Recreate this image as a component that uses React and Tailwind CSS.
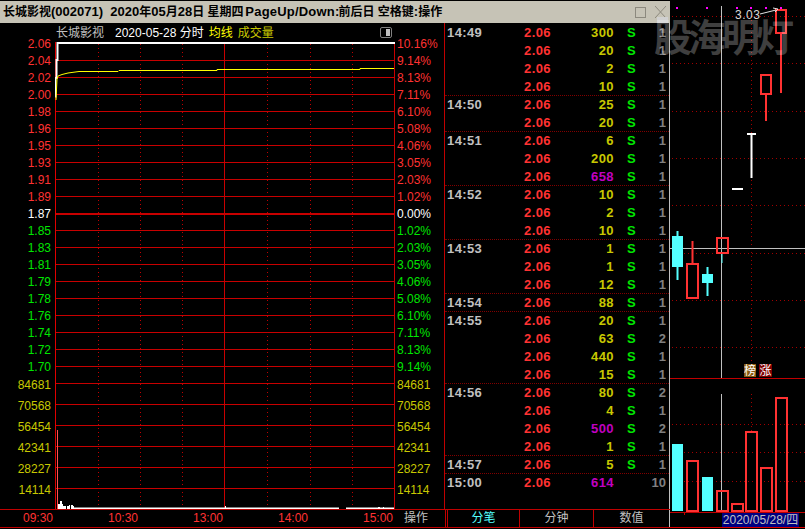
const CJK = { fontFamily: '"Liberation Sans", "Noto Sans CJK SC", sans-serif' };

const prices = [
  ['2.06', '10.16%', 'r'], ['2.04', '9.14%', 'r'], ['2.02', '8.13%', 'r'], ['2.00', '7.11%', 'r'],
  ['1.98', '6.10%', 'r'], ['1.96', '5.08%', 'r'], ['1.95', '4.06%', 'r'], ['1.93', '3.05%', 'r'],
  ['1.91', '2.03%', 'r'], ['1.89', '1.02%', 'r'], ['1.87', '0.00%', 'w'], ['1.85', '1.02%', 'g'],
  ['1.83', '2.03%', 'g'], ['1.81', '3.05%', 'g'], ['1.79', '4.06%', 'g'], ['1.78', '5.08%', 'g'],
  ['1.76', '6.10%', 'g'], ['1.74', '7.11%', 'g'], ['1.72', '8.13%', 'g'], ['1.70', '9.14%', 'g'],
];
const volumes = ['84681', '70568', '56454', '42341', '28227', '14114'];

const axisColor = {
  r: 'text-[#ff3232]',
  w: 'text-white',
  g: 'text-[#00e600]',
};

// [time, vol, count] - time only on first row of each minute
const ticks = [
  ['14:49', 300, 1], ['', 20, 1], ['', 2, 1], ['', 10, 1],
  ['14:50', 25, 1], ['', 20, 1],
  ['14:51', 6, 1], ['', 200, 1], ['', 658, 1],
  ['14:52', 10, 1], ['', 2, 1], ['', 10, 1],
  ['14:53', 1, 1], ['', 1, 1], ['', 12, 1],
  ['14:54', 88, 1],
  ['14:55', 20, 1], ['', 63, 2], ['', 440, 1], ['', 15, 1],
  ['14:56', 80, 2], ['', 4, 1], ['', 500, 2], ['', 1, 1],
  ['14:57', 5, 1],
  ['15:00', 614, 10],
];

const priceGrid = [60, 77, 94, 111, 128, 145, 162, 179, 196, 230, 247, 264, 281, 298, 315, 332, 349, 366, 383, 404, 425, 446, 467, 488];
const dotted = [98, 140, 182, 267, 310, 352];

// small volume bars after the open
const smallBars = [
  [58, 2, 5], [60, 2, 8], [62, 1, 5], [63, 3, 3], [67, 2, 3], [69, 1, 4], [71, 2, 4], [73, 1, 3],
  [225, 1, 3], [378, 2, 2], [383, 1, 2],
];

function MainChart() {
  return (
    <svg width="341" height="467" viewBox="55 42 341 467" className="block">
      {priceGrid.map((y) => (
        <line key={y} x1="55" x2="395" y1={y + 0.5} y2={y + 0.5} stroke="#c80000" />
      ))}
      <line x1="55" x2="395" y1="214" y2="214" stroke="#c80000" strokeWidth="2" />
      {dotted.map((x) => (
        <line key={x} x1={x + 0.5} x2={x + 0.5} y1="44" y2="509" stroke="#c00000" strokeDasharray="1 3" />
      ))}
      <line x1="224.5" x2="224.5" y1="44" y2="509" stroke="#c80000" />
      <line x1="55" x2="55" y1="42" y2="509" stroke="#e00000" strokeWidth="2" />
      <line x1="394.5" x2="394.5" y1="42" y2="509" stroke="#c80000" />
      <polyline
        points="53,96.5 55.5,96.5 55.5,78 56.5,78 56.5,60 57.5,60 57.5,43 395,43"
        fill="none"
        stroke="#fff"
        strokeWidth="2"
      />
      <polyline
        points="56,100 57,79 58,76 62,74.5 68,73 79,71.5 118,71.5 119,70.5 217,70.5 217,69.5 360,69.5 360,68.5 394,68.5"
        fill="none"
        stroke="#ffff00"
      />
      <rect x="57" y="430" width="1" height="79" fill="#ff5050" />
      {smallBars.map(([x, w, h]) => (
        <rect key={x} x={x} y={509 - h} width={w} height={h} fill="#fff" />
      ))}
      <rect x="74" y="507.5" width="265" height="1.5" fill="#fff" />
      <rect x="346" y="507.5" width="48" height="1.5" fill="#fff" />
    </svg>
  );
}

const candles = [
  { x: 672, w: 11, top: 236, bottom: 267, wickTop: 231, wickBottom: 280, up: false },
  { x: 687, w: 11, top: 264, bottom: 298, wickTop: 241, wickBottom: 264, up: true },
  { x: 702, w: 11, top: 274, bottom: 283, wickTop: 267, wickBottom: 296, up: false },
  { x: 717, w: 11, top: 238, bottom: 253, wickTop: 238, wickBottom: 238, up: true },
  { x: 761, w: 10, top: 75, bottom: 94, wickTop: 94, wickBottom: 121, up: true },
  { x: 776, w: 10, top: 10, bottom: 33, wickTop: 33, wickBottom: 93, up: true },
];

const volBars = [
  { x: 672, top: 444, up: false },
  { x: 687, top: 461, up: true },
  { x: 702, top: 477, up: false },
  { x: 717, top: 491, up: true },
  { x: 732, top: 504, up: true },
  { x: 746, top: 432, up: true },
  { x: 761, top: 468, up: true },
  { x: 776, top: 398, up: true },
];

const RED = '#ff3232';
const CYAN = '#54ffff';

function SideChart() {
  return (
    <svg width="135" height="529" viewBox="670 0 135 529" className="block">
      {[16, 63, 111, 158, 205, 253, 300, 347, 424, 452, 481].map((y) => (
        <line key={y} x1="672" x2="805" y1={y + 0.5} y2={y + 0.5} stroke="#a00000" strokeDasharray="1 3" />
      ))}
      <line x1="751.5" x2="751.5" y1="16" y2="378" stroke="#a00000" strokeDasharray="1 3" />
      <line x1="751.5" x2="751.5" y1="394" y2="432" stroke="#a00000" strokeDasharray="1 3" />
      {[677, 707, 737, 751, 766, 781].map((x) => (
        <rect key={x} x={x - 1} y="7" width="2" height="2" fill="#ff00ff" />
      ))}
      <line x1="721.5" x2="721.5" y1="6" y2="378" stroke="#c0c0c0" />
      <line x1="721.5" x2="721.5" y1="394" y2="512" stroke="#c0c0c0" />
      <line x1="670" x2="805" y1="248.5" y2="248.5" stroke="#c0c0c0" />

      <line x1="722" x2="722" y1="253" y2="263" stroke={CYAN} />
      {candles.map((c) => (
        <g key={c.x}>
          <line
            x1={c.x + c.w / 2}
            x2={c.x + c.w / 2}
            y1={c.wickTop}
            y2={c.wickBottom}
            stroke={c.up ? RED : CYAN}
            strokeWidth="2"
          />
          <rect
            x={c.x}
            y={c.top}
            width={c.w}
            height={c.bottom - c.top}
            fill={c.up ? 'none' : CYAN}
            stroke={c.up ? RED : CYAN}
            strokeWidth={c.up ? 2 : 0}
          />
        </g>
      ))}
      <rect x="747" y="133" width="9" height="2" fill="#fff" />
      <rect x="750.5" y="134" width="2" height="44" fill="#fff" />
      <rect x="732" y="188" width="11" height="2" fill="#fff" />
      <polyline points="760,14 776,10" fill="none" stroke="#e0e0e0" />
      <polyline points="773,8 778,9 775,12" fill="none" stroke="#e0e0e0" />

      {volBars.map((b) => (
        <rect
          key={b.x}
          x={b.x}
          y={b.top}
          width="11"
          height={511 - b.top}
          fill={b.up ? 'none' : CYAN}
          stroke={b.up ? RED : 'none'}
          strokeWidth="2"
        />
      ))}
      <line x1="670" x2="805" y1="378.5" y2="378.5" stroke="#c00000" />
      <line x1="670" x2="805" y1="512.5" y2="512.5" stroke="#c00000" />
      <line x1="684.5" x2="684.5" y1="513" y2="515" stroke="#c00000" />
      <line x1="670" x2="805" y1="527.5" y2="527.5" stroke="#e00000" />
    </svg>
  );
}

function TickRow({ time, vol, count, last }) {
  const volColor = vol >= 500 ? 'text-[#c000c0]' : 'text-[#c8c800]';
  return (
    <div
      className={`flex h-[18px] items-center pl-[2px] pr-[3px] text-[13px] font-bold ${
        time && time !== '14:49' ? 'border-t border-dotted border-[#800000] pt-px' : 'pt-[2px]'
      }`}
    >
      <span className="w-[77px] tracking-[0.4px] text-[#c0c0c0]">{time}</span>
      <span className="w-[30px] tracking-[0.4px] text-[#ff3232]">2.06</span>
      <span className={`w-[60px] text-right tracking-[0.4px] ${volColor}`}>{vol}</span>
      <span className="ml-[13px] w-[8px] text-[#00e600]">{last ? '' : 'S'}</span>
      <span className="flex-1 text-right text-[#808080]">{count}</span>
    </div>
  );
}

export default function App() {
  return (
    <div className="relative flex h-[529px] w-[805px] overflow-hidden bg-black text-[12px]" style={CJK}>
      <div className="flex w-[670px] flex-col">
        <div className="mt-px flex h-[22px] items-center justify-between bg-[#c6c3b6] pl-[3px] pr-[4px]">
          <span className="whitespace-nowrap text-[13px] font-bold text-black">
            <span className="text-[12px]">长城影视</span>(002071)&nbsp; 2020<span className="text-[12px]">年</span>05<span className="text-[12px]">月</span>28<span className="text-[12px]">日 星期四</span>
            <span className="-ml-[2px] tracking-[0.2px]"> PageUp/Down:</span><span className="-ml-px text-[12px]">前后日 空格键</span>:<span className="text-[12px]">操作</span>
          </span>
          <div className="flex items-center gap-[9px]">
            <div className="h-[11px] w-[11px] border border-[#8c897e]" />
            <svg width="11" height="12" viewBox="0 0 11 12" className="block">
              <path d="M0 0 L11 12 M11 0 L0 12" stroke="#8c897e" fill="none" />
            </svg>
          </div>
        </div>

        <div className="flex h-[486px]">
          <div className="flex w-[55px] flex-col items-end pr-[4px] pt-[13px]">
            {prices.map(([p, , c]) => (
              <div key={p} className={`h-[17px] leading-[17px] ${axisColor[c]}`}>{p}</div>
            ))}
            <div className="-mt-px">
              {volumes.map((v) => (
                <div key={v} className="h-[21px] text-right leading-[21px] text-[#c8c800]">{v}</div>
              ))}
            </div>
          </div>

          <div className="flex w-[341px] flex-col">
            <div className="flex h-[19px] items-center">
              <span className="ml-px text-[#c0c0c0]">长城影视</span>
              <span className="ml-[11px] text-white">2020-05-28 分时</span>
              <span className="ml-[5px] text-[#ffff00]">均线</span>
              <span className="ml-[5px] text-[#c8c800]">成交量</span>
              <div className="ml-auto mr-[4px] flex h-[11px] w-[12px] justify-end rounded-[2px] border border-[#808080] p-px">
                <div className="h-full w-[4px] bg-[#c0c0c0]" />
              </div>
            </div>
            <MainChart />
          </div>

          <div className="flex w-[49px] flex-col border-r border-[#c00000] pl-px pt-[13px]">
            {prices.map(([p, pct, c]) => (
              <div key={p} className={`h-[17px] leading-[17px] ${axisColor[c]}`}>{pct}</div>
            ))}
            <div className="-mt-px">
              {volumes.map((v) => (
                <div key={v} className="h-[21px] leading-[21px] text-[#c8c800]">{v}</div>
              ))}
            </div>
          </div>

          <div className="flex-1 border-r border-[#c0c0c0]">
            {ticks.map(([time, vol, count], i) => (
              <TickRow key={i} time={time} vol={vol} count={count} last={i === ticks.length - 1} />
            ))}
          </div>
        </div>

        <div className="flex h-[19px] border-y border-[#c00000] text-[12px] leading-[17px]">
          <div className="grid w-[395px] grid-cols-[85px_85px_85px_85px_85px] pl-[23px] text-[#ff3232]">
            <span>09:30</span>
            <span>10:30</span>
            <span>13:00</span>
            <span>14:00</span>
            <span>15:00</span>
          </div>
          <div className="w-[51px] border-r border-[#c00000] pl-[9px] text-[#c0c0c0]">操作</div>
          <div className="ml-px flex w-[72px] justify-center border-l border-[#c00000] text-[#54ffff]">分笔</div>
          <div className="flex w-[74px] justify-center border-l border-[#c00000] text-[#c0c0c0]">分钟</div>
          <div className="flex flex-1 justify-center border-x border-l-[#c00000] border-r-[#c0c0c0] text-[#c0c0c0]">数值</div>
        </div>
      </div>

      <div className="relative w-[135px]">
        <SideChart />
        <span className="absolute left-[65px] top-[8px] text-[12px] leading-[15px] tracking-[0.5px] text-[#d8d8d8]">3.03</span>
        <span className="absolute left-[74px] top-[364px] flex h-[13px] w-[12px] items-center justify-center bg-[#8b5a10] text-[12px] text-white">榜</span>
        <span className="absolute left-[89px] top-[364px] flex h-[13px] w-[13px] items-center justify-center bg-[#800000] text-[12px] text-white">涨</span>
        <span className="absolute left-[52px] top-[513px] flex h-[14px] w-[77px] items-center justify-center whitespace-nowrap bg-[#000080] text-[12px] text-[#c0c0c0]">
          2020/05/28/四
        </span>
      </div>

      <div className="absolute left-[657px] top-[17px] h-[6px] w-[11px] bg-[#d0d0d0]" />
      <span className="pointer-events-none absolute left-[654px] top-[15px] whitespace-nowrap text-[38px] font-bold leading-[40px] tracking-[-4px] text-white/25" style={{ fontFamily: '"Noto Sans CJK SC", sans-serif' }}>
        股海明灯
      </span>
    </div>
  );
}
